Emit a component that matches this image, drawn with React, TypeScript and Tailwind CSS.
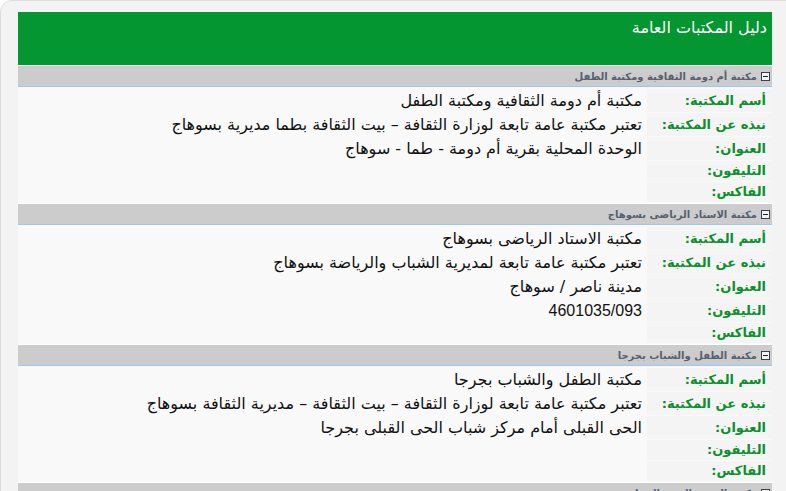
import React from "react";

type Library = {
  title: string;
  name: string;
  about: string;
  address: string;
  phone: string;
  fax: string;
};

const libraries: Library[] = [
  {
    title: "مكتبة أم دومة الثقافية ومكتبة الطفل",
    name: "مكتبة أم دومة الثقافية ومكتبة الطفل",
    about: "تعتبر مكتبة عامة تابعة لوزارة الثقافة – بيت الثقافة بطما مديرية بسوهاج",
    address: "الوحدة المحلية بقرية أم دومة - طما - سوهاج",
    phone: "",
    fax: "",
  },
  {
    title: "مكتبة الاستاد الرياضى بسوهاج",
    name: "مكتبة الاستاد الرياضى بسوهاج",
    about: "تعتبر مكتبة عامة تابعة لمديرية الشباب والرياضة بسوهاج",
    address: "مدينة ناصر / سوهاج",
    phone: "4601035/093",
    fax: "",
  },
  {
    title: "مكتبة الطفل والشباب بجرجا",
    name: "مكتبة الطفل والشباب بجرجا",
    about: "تعتبر مكتبة عامة تابعة لوزارة الثقافة – بيت الثقافة – مديرية الثقافة بسوهاج",
    address: "الحى القبلى أمام مركز شباب الحى القبلى بجرجا",
    phone: "",
    fax: "",
  },
];

const MinusBox = () => (
  <svg width="9" height="9" viewBox="0 0 9 9" className="shrink-0">
    <rect x="0.5" y="0.5" width="8" height="8" fill="#f4f4f4" stroke="#3a3f4a" />
    <line x1="2" y1="4.5" x2="7" y2="4.5" stroke="#1e2330" strokeWidth="1" />
  </svg>
);

const Row = ({ label, value, ltr }: { label: string; value: string; ltr?: boolean }) => (
  <div className={`flex mb-px ${value ? "h-[23px]" : "h-[20px]"}`}>
    <div className="w-[125px] shrink-0 bg-[#f4f4f4] pr-[6px] flex items-center text-[13px] font-bold text-[#0c8f2c]">
      {label}
    </div>
    <div className="flex-1 pr-[5px] flex items-center text-[16px] text-[#111] whitespace-nowrap">
      {value &&
        (ltr ? (
          <span dir="ltr" className="font-['Liberation_Sans',sans-serif]">
            {value}
          </span>
        ) : (
          <span>{value}</span>
        ))}
    </div>
  </div>
);

const SectionHeader = ({ title }: { title: string }) => (
  <div className="border-t border-white bg-[#cccccc] h-[22px] border-b border-b-[#99c8f5] flex items-center gap-[4px] pr-[2px] text-[10px] font-bold text-[#566072]">
    <MinusBox />
    <span>{title}</span>
  </div>
);

const Section = ({ lib }: { lib: Library }) => (
  <div>
    <SectionHeader title={lib.title} />
    <div className="pt-[2px]">
      <Row label="أسم المكتبة:" value={lib.name} />
      <Row label="نبذه عن المكتبة:" value={lib.about} />
      <Row label="العنوان:" value={lib.address} />
      <Row label="التليفون:" value={lib.phone} ltr />
      <Row label="الفاكس:" value={lib.fax} />
    </div>
  </div>
);

export default function App() {
  return (
    <div className="w-[786px] h-[491px] overflow-hidden bg-white" style={{ fontFamily: '"DejaVu Sans", sans-serif' }}>
      <div className="w-[800px] h-[520px] rounded-[12px] border border-[#dcdcdc] bg-[#f3f3f3] pl-[17px] pt-[11px]">
        <div dir="rtl" className="w-[754px] bg-[#f9f9f9]">
          {/* title bar */}
          <div className="bg-[#039631] h-[53px] pr-[5px] pt-[4px] text-[16px] text-white">
            دليل المكتبات العامة
          </div>
          {libraries.map((lib) => (
            <Section key={lib.title} lib={lib} />
          ))}
          <SectionHeader title="مكتبة المعهد الفنى الصناعى" />
        </div>
      </div>
    </div>
  );
}
